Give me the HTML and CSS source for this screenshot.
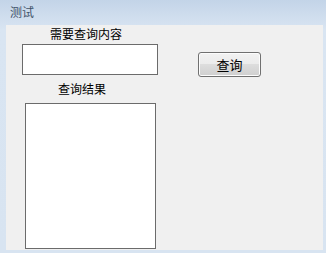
FILE: index.html
```
<!DOCTYPE html>
<html lang="zh-CN">
<head>
    <meta charset="UTF-8">
    <meta name="viewport" content="width=device-width, initial-scale=1.0">
    <title>测试</title>
    <link rel="stylesheet" href="styles.css">
</head>
<body>

    <div class="titlebar">测试</div>

    <div class="client">
        <div class="left">
            <div class="label label-query">需要查询内容</div>
            <input class="query-input" type="text">
            <div class="label label-result">查询结果</div>
            <textarea class="result-box"></textarea>
        </div>
        <button class="query-btn">查询</button>
    </div>

</body>
</html>
```

FILE: styles.css
```
body {
    margin: 0;
    padding: 0;
    width: 326px;
    height: 253px;
    font-family: "Noto Sans CJK SC", "DejaVu Sans", sans-serif;
    font-size: 12px;
    background: linear-gradient(#c3d4e8, #d9e5f2 30px, #d8e4f1);
    overflow: hidden;
}
.titlebar {
    height: 25px;
    line-height: 24px;
    padding-left: 10px;
    color: #3f5269;
}
.client {
    margin: 0 3px 3px 6px;
    height: 225px;
    background-color: #f0f0f0;
    display: flex;
    align-items: flex-start;
}
.left {
    display: flex;
    flex-direction: column;
    align-items: flex-start;
}
.label {
    line-height: 16px;
    color: #000;
}
.label-query {
    margin: 1px 0 0 44px;
}
.query-input {
    margin: 2px 0 0 16px;
    width: 136px;
    height: 31px;
    box-sizing: border-box;
    border: 1px solid #6b6b6b;
    background: #fff;
    padding: 0;
}
.label-result {
    margin: 6px 0 0 52px;
}
.result-box {
    margin: 6px 0 0 19px;
    width: 131px;
    height: 146px;
    box-sizing: border-box;
    border: 1px solid #6b6b6b;
    background: #fff;
    resize: none;
    padding: 0;
}
.query-btn {
    margin: 27px 0 0 40px;
    width: 63px;
    height: 25px;
    box-sizing: border-box;
    border: 1px solid #707070;
    border-radius: 3px;
    background: linear-gradient(#f2f2f2, #ebebeb 50%, #dddddd 50%, #cfcfcf);
    box-shadow: inset 0 0 0 1px #fcfcfc;
    font-family: inherit;
    font-size: 13px;
    color: #000;
    padding: 0;
}
```
